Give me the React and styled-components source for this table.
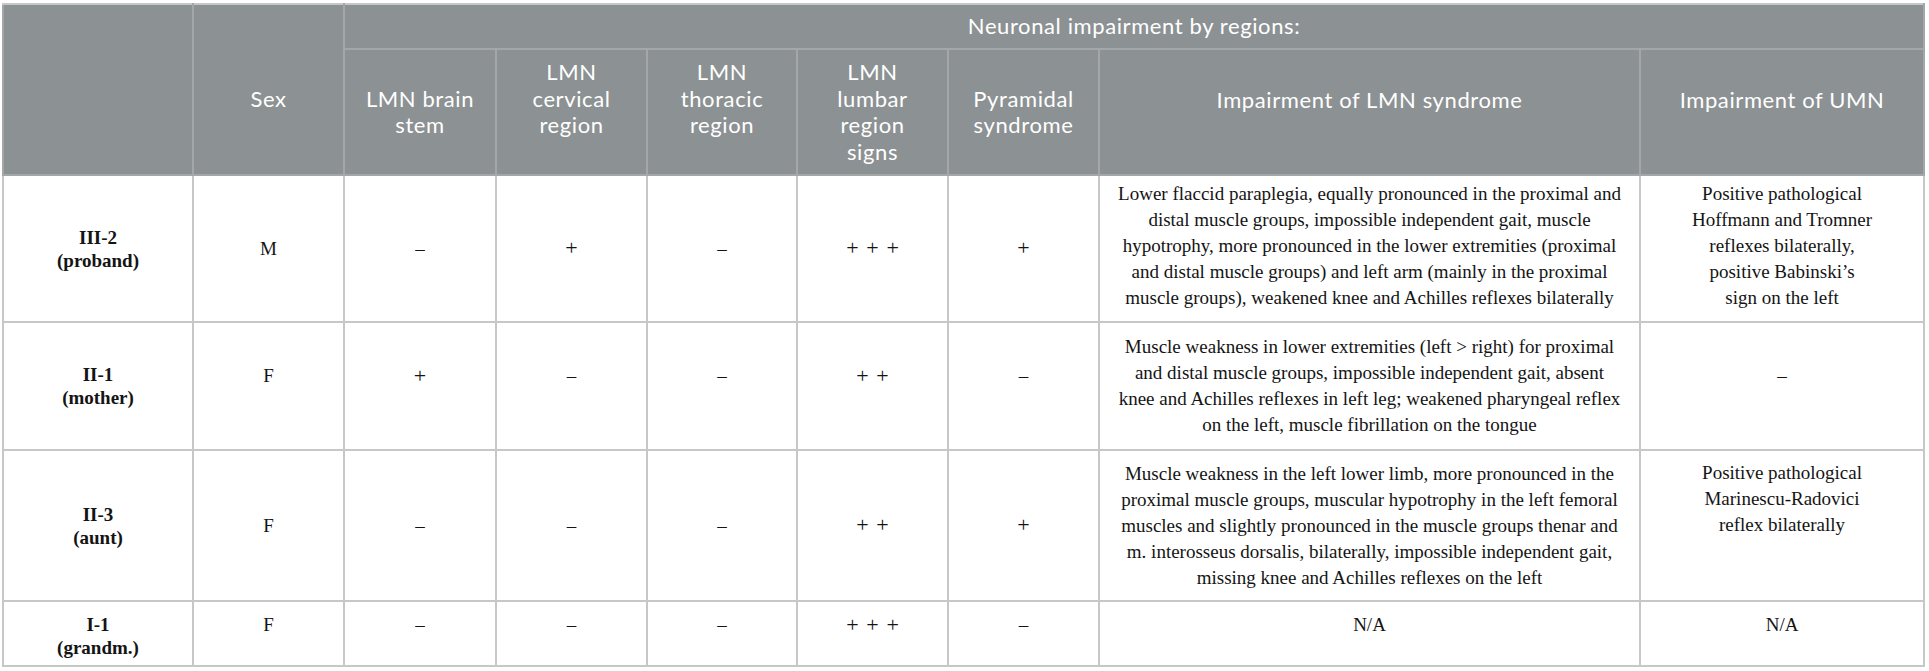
import React from "react";
import styled, { createGlobalStyle } from "styled-components";

const Global = createGlobalStyle`
  html, body { margin: 0; padding: 0; background: #ffffff; }
`;

const Page = styled.div`
  padding: 3px 4px 0 2px;
`;

const Table = styled.table`
  width: 1923px;
  border-collapse: collapse;
  table-layout: fixed;
  border: 2px solid #c6c8c8;
`;

const HeadRow = styled.tr`
  height: ${(p) => p.$h}px;
`;

const HeadCell = styled.th`
  background: #8c9193;
  color: #ffffff;
  font-family: Lato, "Open Sans", sans-serif;
  font-weight: 400;
  font-size: 22px;
  letter-spacing: 0.6px;
  line-height: 26.5px;
  text-align: center;
  vertical-align: middle;
  border: 2px solid #a3a7a8;
  border-top-color: #c6c8c8;
  padding: ${(p) => 4 + Math.max(p.$shift || 0, 0) * 2}px 4px
    ${(p) => 4 + Math.max(-(p.$shift || 0), 0) * 2}px;
  white-space: nowrap;
`;

const BodyRow = styled.tr`
  height: ${(p) => p.$h}px;
`;

const Cell = styled.td`
  font-family: "Liberation Serif", "Times New Roman", serif;
  font-size: 19px;
  line-height: 26px;
  color: #141414;
  text-align: center;
  vertical-align: ${(p) => (p.$top ? "top" : "middle")};
  border: 2px solid #c6c8c8;
  padding: ${(p) => (p.$top ? p.$top : 4)}px 6px ${(p) => 4 + (p.$lift || 0) * 2}px;
  white-space: nowrap;
`;

const IdCell = styled(Cell)`
  font-weight: 700;
  line-height: 23px;
`;

const Plus = styled.span`
  font-size: 22px;
  letter-spacing: 0.35em;
  margin-right: -0.35em;
`;

const Lines = ({ lines }) =>
  lines.map((l, i) => (
    <React.Fragment key={i}>
      {i > 0 && <br />}
      {l}
    </React.Fragment>
  ));

const Value = ({ v }) => (v.includes("+") ? <Plus>{v}</Plus> : v);

const widths = [190, 151, 152, 151, 150, 151, 151, 541, 284];

const rows = [
  {
    h: 147,
    lift: 0,
    textLift: 3,
    id: ["III-2", "(proband)"],
    sex: "M",
    vals: ["–", "+", "–", "+++", "+"],
    lmn: [
      "Lower flaccid paraplegia, equally pronounced in the proximal and",
      "distal muscle groups, impossible independent gait, muscle",
      "hypotrophy, more pronounced in the lower extremities (proximal",
      "and distal muscle groups) and left arm (mainly in the proximal",
      "muscle groups), weakened knee and Achilles reflexes bilaterally",
    ],
    umn: [
      "Positive pathological",
      "Hoffmann and Tromner",
      "reflexes bilaterally,",
      "positive Babinski’s",
      "sign on the left",
    ],
  },
  {
    h: 128,
    lift: 10,
    textLift: 0,
    id: ["II-1", "(mother)"],
    sex: "F",
    vals: ["+", "–", "–", "++", "–"],
    lmn: [
      "Muscle weakness in lower extremities (left > right) for proximal",
      "and distal muscle groups, impossible independent gait, absent",
      "knee and Achilles reflexes in left leg; weakened pharyngeal reflex",
      "on the left, muscle fibrillation on the tongue",
    ],
    umn: ["–"],
  },
  {
    h: 151,
    lift: 0,
    textLift: 0,
    id: ["II-3", "(aunt)"],
    sex: "F",
    vals: ["–", "–", "–", "++", "+"],
    lmn: [
      "Muscle weakness in the left lower limb, more pronounced in the",
      "proximal muscle groups, muscular hypotrophy in the left femoral",
      "muscles and slightly pronounced in the muscle groups thenar and",
      "m. interosseus dorsalis, bilaterally, impossible independent gait,",
      "missing knee and Achilles reflexes on the left",
    ],
    umn: ["Positive pathological", "Marinescu-Radovici", "reflex bilaterally"],
    umnTop: 9,
  },
  {
    h: 65,
    lift: 0,
    textLift: 0,
    top: 10,
    idTop: 11,
    id: ["I-1", "(grandm.)"],
    sex: "F",
    vals: ["–", "–", "–", "+++", "–"],
    lmn: ["N/A"],
    umn: ["N/A"],
  },
];

export default function App() {
  return (
    <Page>
      <Global />
      <Table>
        <colgroup>
          {widths.map((w, i) => (
            <col key={i} style={{ width: w }} />
          ))}
        </colgroup>
        <thead>
          <HeadRow $h={45}>
            <HeadCell rowSpan={2} />
            <HeadCell rowSpan={2} $shift={10}>
              Sex
            </HeadCell>
            <HeadCell colSpan={7}>Neuronal impairment by regions:</HeadCell>
          </HeadRow>
          <HeadRow $h={126}>
            <HeadCell>
              <Lines lines={["LMN brain", "stem"]} />
            </HeadCell>
            <HeadCell $shift={-13}>
              <Lines lines={["LMN", "cervical", "region"]} />
            </HeadCell>
            <HeadCell $shift={-13}>
              <Lines lines={["LMN", "thoracic", "region"]} />
            </HeadCell>
            <HeadCell>
              <Lines lines={["LMN", "lumbar", "region", "signs"]} />
            </HeadCell>
            <HeadCell>
              <Lines lines={["Pyramidal", "syndrome"]} />
            </HeadCell>
            <HeadCell $shift={-12}>Impairment of LMN syndrome</HeadCell>
            <HeadCell $shift={-12}>Impairment of UMN</HeadCell>
          </HeadRow>
        </thead>
        <tbody>
          {rows.map((r, i) => (
            <BodyRow key={i} $h={r.h}>
              <IdCell $top={r.idTop}>
                <Lines lines={r.id} />
              </IdCell>
              <Cell $lift={r.lift} $top={r.top}>
                {r.sex}
              </Cell>
              {r.vals.map((v, j) => (
                <Cell key={j} $lift={r.lift} $top={r.top}>
                  <Value v={v} />
                </Cell>
              ))}
              <Cell $lift={r.textLift} $top={r.top}>
                <Lines lines={r.lmn} />
              </Cell>
              <Cell
                $lift={r.umn.length === 1 ? r.lift : r.textLift}
                $top={r.umnTop || r.top}
              >
                <Lines lines={r.umn} />
              </Cell>
            </BodyRow>
          ))}
        </tbody>
      </Table>
    </Page>
  );
}
